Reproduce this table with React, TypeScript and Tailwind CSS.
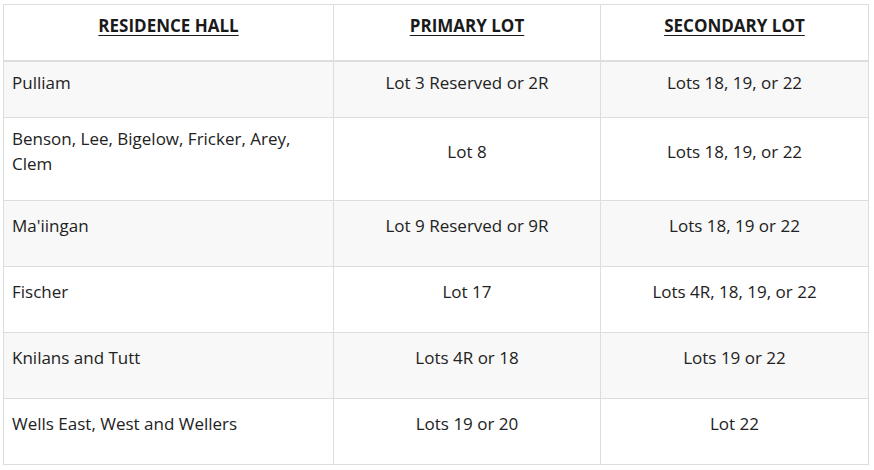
type Row = {
  hall: string;
  primary: string;
  secondary: string;
  h: string;
  pb: string;
};

const rows: Row[] = [
  { hall: "Pulliam", primary: "Lot 3 Reserved or 2R", secondary: "Lots 18, 19, or 22", h: "h-[56px]", pb: "pb-[14px]" },
  { hall: "Benson, Lee, Bigelow, Fricker, Arey, Clem", primary: "Lot 8", secondary: "Lots 18, 19, or 22", h: "h-[83px]", pb: "pb-[16px]" },
  { hall: "Ma'iingan", primary: "Lot 9 Reserved or 9R", secondary: "Lots 18, 19 or 22", h: "h-[66px]", pb: "pb-[17px]" },
  { hall: "Fischer", primary: "Lot 17", secondary: "Lots 4R, 18, 19, or 22", h: "h-[66px]", pb: "pb-[17px]" },
  { hall: "Knilans and Tutt", primary: "Lots 4R or 18", secondary: "Lots 19 or 22", h: "h-[66px]", pb: "pb-[17px]" },
  { hall: "Wells East, West and Wellers", primary: "Lots 19 or 20", secondary: "Lot 22", h: "h-[65px]", pb: "pb-[17px]" },
];

const App = () => {
  return (
    <div className="w-[874px] h-[470px] bg-white pt-[4px] pl-[3px] font-['Open_Sans',sans-serif] text-[17px] leading-[25px] text-[#222]">
      <div className="w-[866px] border border-[#dddddd]">
        <div className="grid grid-cols-[330px_267px_267px] h-[57px] border-b-2 border-[#dddddd] font-bold text-[#1a1a1a]">
          <div className="border-r border-[#dddddd] text-center pt-[8px]">
            <span className="underline underline-offset-[3px]">RESIDENCE HALL</span>
          </div>
          <div className="border-r border-[#dddddd] text-center pt-[8px]">
            <span className="underline underline-offset-[3px]">PRIMARY LOT</span>
          </div>
          <div className="text-center pt-[8px]">
            <span className="underline underline-offset-[3px]">SECONDARY LOT</span>
          </div>
        </div>
        {rows.map((r, i) => (
          <div
            key={r.hall}
            className={`grid grid-cols-[330px_267px_267px] ${r.h} ${i < rows.length - 1 ? "border-b" : ""} border-[#dddddd] ${i % 2 === 0 ? "bg-[#f8f8f8]" : "bg-white"}`}
          >
            <div className={`border-r border-[#dddddd] flex items-center px-[8px] ${r.pb}`}>
              <p>{r.hall}</p>
            </div>
            <div className={`border-r border-[#dddddd] flex items-center justify-center px-[8px] ${r.pb}`}>
              <p>{r.primary}</p>
            </div>
            <div className={`flex items-center justify-center px-[8px] ${r.pb}`}>
              <p>{r.secondary}</p>
            </div>
          </div>
        ))}
      </div>
    </div>
  );
};

export default App;
